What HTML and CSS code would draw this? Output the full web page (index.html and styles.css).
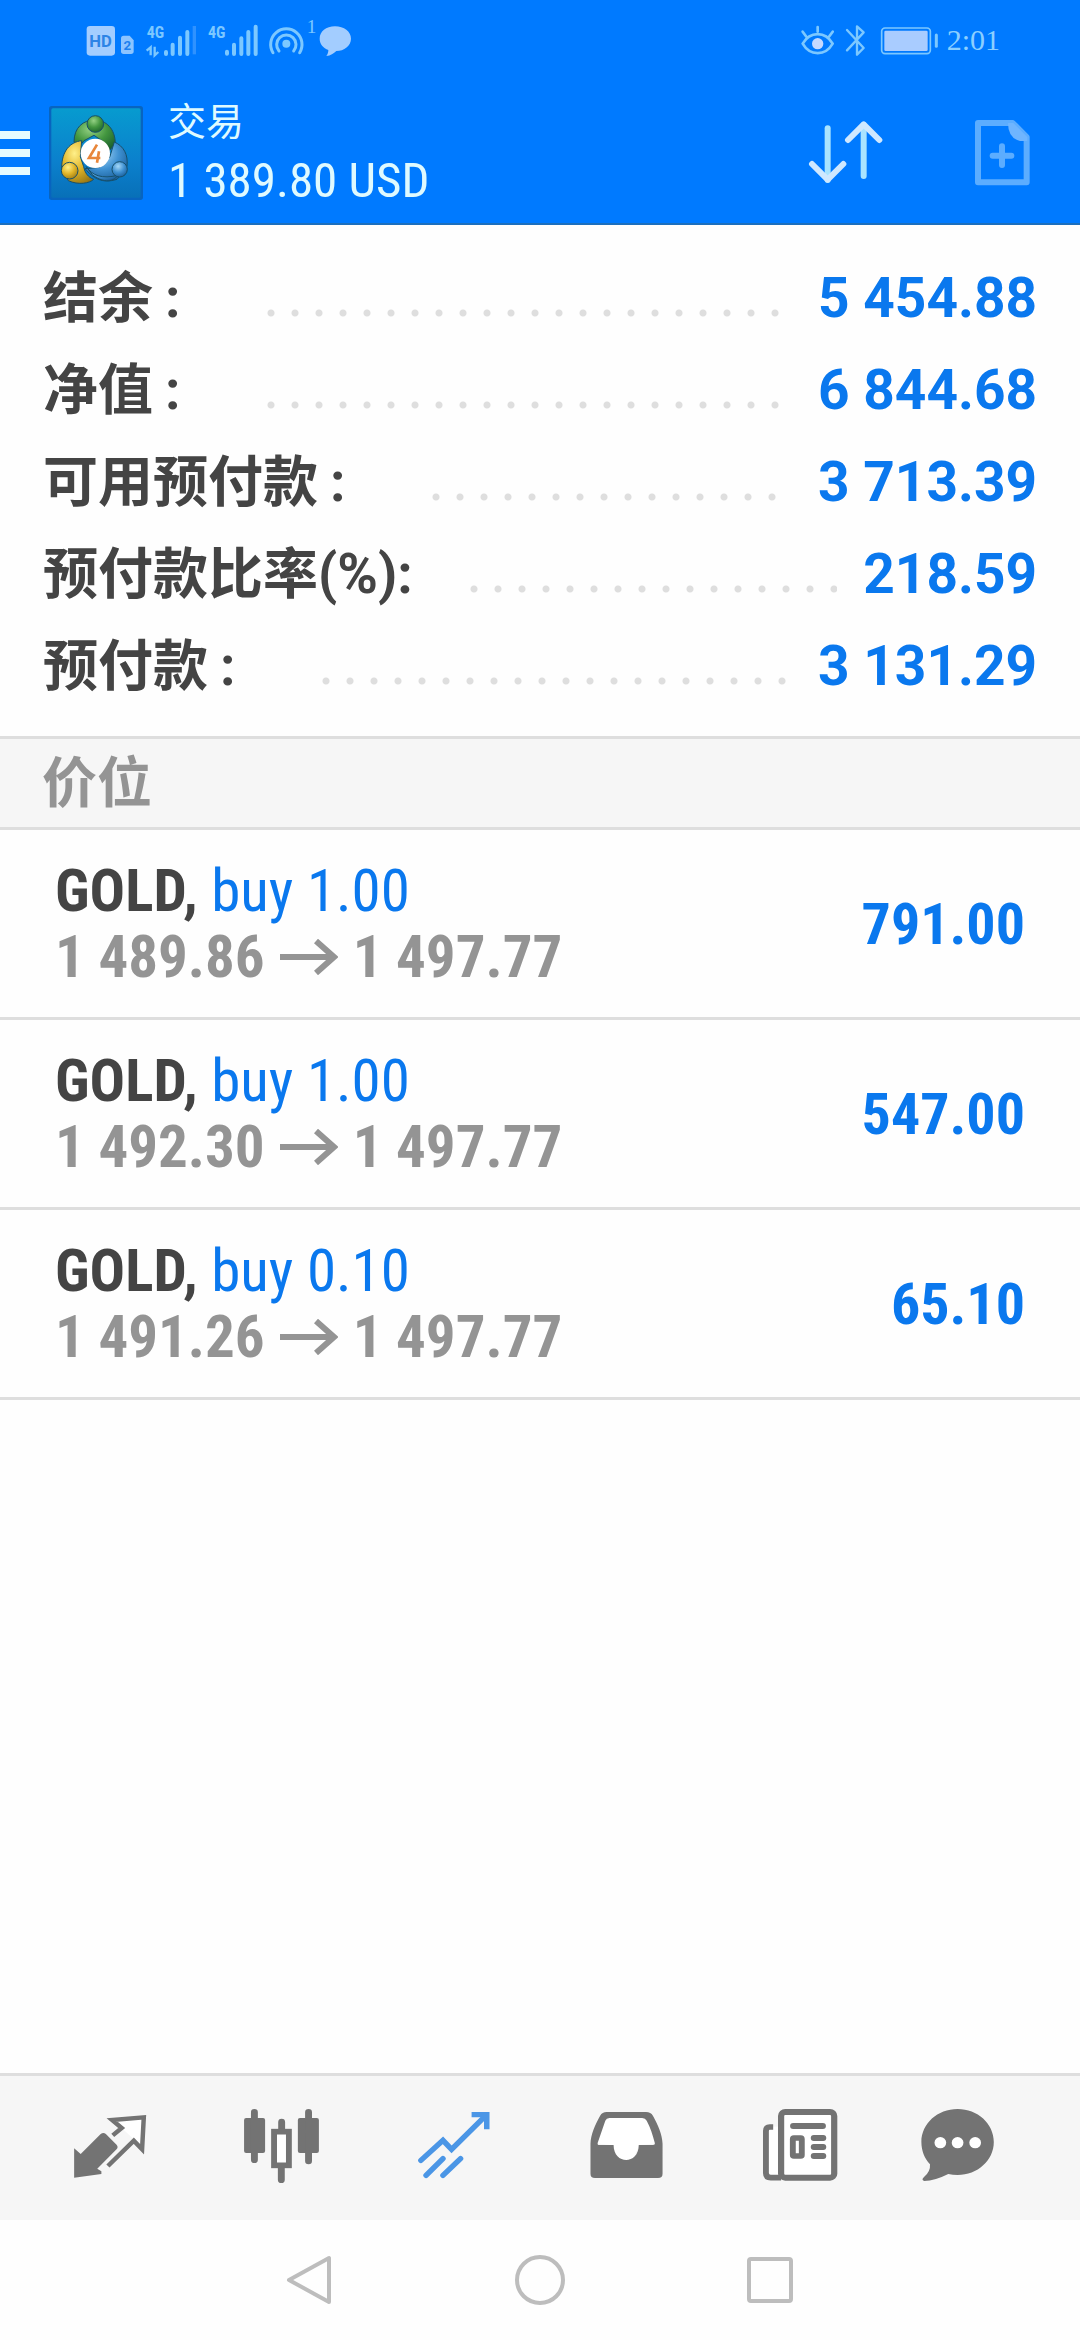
FILE: index.html
```html
<!DOCTYPE html>
<html lang="zh-CN">
<head>
<meta charset="utf-8">
<meta name="viewport" content="width=device-width, initial-scale=1">
<title>交易</title>
<link rel="stylesheet" href="styles.css">
</head>
<body>
<header class="top">
  <div class="status">
    <svg class="status-left" width="280" height="40" viewBox="0 0 840 120" aria-hidden="true">
      <rect x="20" y="18" width="85" height="89" rx="10" fill="#a3cdff"/>
      <text x="62" y="82" text-anchor="middle" class="hd">HD</text>
      <path d="M123 55q0-8 8-8h18l12 14v33q0 8-8 8h-22q-8 0-8-8z" fill="#8cc4ff"/>
      <text x="142" y="91" text-anchor="middle" class="sim">2</text>
      <text x="200" y="53" class="net">4G</text>
      <path d="M200 92l12-10v24M224 80v26l11-10" fill="none" stroke="#7cc8ff" stroke-width="7"/>
      <path d="M258 96v6M278 74v28M300 53v49M322 36v66" stroke="#7cc8ff" stroke-width="12" stroke-linecap="round"/>
      <path d="M343 18v85" stroke="#2f92ff" stroke-width="10"/>
      <text x="384" y="53" class="net">4G</text>
      <path d="M441 95v6M462 74v28M484 55v47M505 36v66M527 20v82" stroke="#7cc8ff" stroke-width="12" stroke-linecap="round"/>
      <path d="M579 98a47 47 0 1 1 80 0M597 93a29 29 0 1 1 44 0" fill="none" stroke="#7cc8ff" stroke-width="9" stroke-linecap="round"/>
      <circle cx="619" cy="71" r="12" fill="#7cc8ff"/>
      <text x="680" y="40" class="count">1</text>
      <path d="M765 19c27 0 48 16 48 37s-21 37-44 37c-8 7-17 14-30 15 4-5 6-10 6-18-15-6-26-18-26-34 0-21 19-37 46-37z" fill="#a3cdff"/>
    </svg>
    <div class="status-right">
      <svg width="140" height="40" viewBox="0 0 420 120" aria-hidden="true">
        <g fill="none" stroke="#7cc8ff" stroke-width="8" stroke-linecap="round" stroke-linejoin="round">
          <path d="M5 71c22-38 68-38 90 0-22 38-68 38-90 0zM50 21v14M5 35l10 14M95 35l-10 14"/>
          <path d="M138 30l50 54-20 20V19l20 18-50 54" stroke-width="7"/>
          <rect x="242" y="24" width="146" height="77" rx="10" stroke-width="5"/>
          <path d="M406 45v34" stroke-width="9"/>
        </g>
        <circle cx="50" cy="71" r="17" fill="#c5d9ff"/>
        <rect x="250" y="32" width="130" height="61" rx="4" fill="#a9ccff"/>
      </svg>
      <time class="clock">2:01</time>
    </div>
  </div>
  <div class="bar">
    <button class="menu" aria-label="菜单"><i></i><i></i><i></i></button>
    <svg class="logo" width="94" height="94" viewBox="0 0 282 282" aria-hidden="true">
      <defs>
        <linearGradient id="bg" x1="0" y1="0" x2="0" y2="1"><stop offset="0" stop-color="#079bcf"/><stop offset=".6" stop-color="#0b80cd"/><stop offset="1" stop-color="#0870b8"/></linearGradient>
        <radialGradient id="gr" cx=".4" cy=".3" r=".8"><stop offset="0" stop-color="#94d183"/><stop offset=".5" stop-color="#43963f"/><stop offset="1" stop-color="#175b2b"/></radialGradient>
        <radialGradient id="ye" cx=".4" cy=".3" r=".8"><stop offset="0" stop-color="#fff08a"/><stop offset=".5" stop-color="#e0b428"/><stop offset="1" stop-color="#927314"/></radialGradient>
        <radialGradient id="bl" cx=".4" cy=".3" r=".8"><stop offset="0" stop-color="#a6d8f7"/><stop offset=".5" stop-color="#3f91d2"/><stop offset="1" stop-color="#12548f"/></radialGradient>
      </defs>
      <rect width="282" height="282" rx="8" fill="#0864bf"/>
      <rect x="7" y="7" width="268" height="268" rx="5" fill="url(#bg)"/>
      <g stroke="#17506b" stroke-width="3">
        <path d="M75 108c0-44 28-66 62-66s62 26 62 72l-20 22-20-32-24-16-30 16-10 12z" fill="url(#gr)"/>
        <path d="M196 108c28 12 42 38 38 72l-12 20-18 20c-46 14-72-4-96-32l44-4 30-30z" fill="url(#bl)"/>
        <path d="M98 104c-34 4-60 30-60 82l20 38c30 14 64 8 76-4-16-6-26-18-30-38l-10-30z" fill="url(#ye)"/>
        <path d="M112 182c16 26 48 38 94 26-14 24-50 20-76-2z" fill="url(#bl)"/>
        <circle cx="139" cy="54" r="25" fill="url(#gr)"/>
        <circle cx="62" cy="194" r="25" fill="url(#ye)"/>
        <circle cx="212" cy="190" r="23" fill="url(#bl)"/>
      </g>
      <circle cx="139" cy="142" r="44" fill="#fff"/>
      <path d="M144 116l-24 40h34M150 136l-6 34" fill="none" stroke="#e8863a" stroke-width="8"/>
    </svg>
    <div class="title">
      <h1>交易</h1>
      <p>1 389.80 USD</p>
    </div>
    <button class="icon-btn" aria-label="排序">
      <svg width="76" height="66" viewBox="0 0 228 198" fill="none" stroke-linecap="round" stroke-linejoin="round" stroke-width="18">
        <path d="M59 25v155" stroke="#a9e4ff"/><path d="M167 15v153" stroke="#a9e4ff"/>
        <path d="M12 132l47 47 47-47M120 60l47-47 47 47" stroke="#cfe8ff"/>
      </svg>
    </button>
    <button class="icon-btn" aria-label="新订单">
      <svg width="56" height="68" viewBox="0 0 168 204">
        <path d="M12 12h104l42 42v136H12z" fill="none" stroke="#5cadff" stroke-width="18" stroke-linejoin="round"/>
        <path d="M102 12h16l42 42v12h-22q-36-8-36-54z" fill="#6fb5ff"/>
        <path d="M84 82v56M56 110h56" stroke="#5cadff" stroke-width="18" stroke-linecap="round"/>
      </svg>
    </button>
  </div>
</header>

<main class="content">
  <dl class="summary">
    <div class="line"><dt>结余<span class="colon">:</span></dt><dd>5 454.88</dd></div>
    <div class="line"><dt>净值<span class="colon">:</span></dt><dd>6 844.68</dd></div>
    <div class="line"><dt>可用预付款<span class="colon">:</span></dt><dd>3 713.39</dd></div>
    <div class="line"><dt>预付款比率(%):</dt><dd>218.59</dd></div>
    <div class="line"><dt>预付款<span class="colon">:</span></dt><dd>3 131.29</dd></div>
  </dl>
  <h2 class="section">价位</h2>
  <ul class="positions">
    <li>
      <div><p class="deal"><b>GOLD,</b> buy 1.00</p>
      <p class="prices">1 489.86 <svg class="arrow" viewBox="0 0 58 36"><path d="M0 18h54M36 2l18 16-18 16"/></svg> 1 497.77</p></div>
      <strong>791.00</strong>
    </li>
    <li>
      <div><p class="deal"><b>GOLD,</b> buy 1.00</p>
      <p class="prices">1 492.30 <svg class="arrow" viewBox="0 0 58 36"><path d="M0 18h54M36 2l18 16-18 16"/></svg> 1 497.77</p></div>
      <strong>547.00</strong>
    </li>
    <li>
      <div><p class="deal"><b>GOLD,</b> buy 0.10</p>
      <p class="prices">1 491.26 <svg class="arrow" viewBox="0 0 58 36"><path d="M0 18h54M36 2l18 16-18 16"/></svg> 1 497.77</p></div>
      <strong>65.10</strong>
    </li>
  </ul>
</main>

<nav class="tabs">
  <button aria-label="行情">
    <svg viewBox="203 138 232 240" preserveAspectRatio="none">
      <path d="M215 265l19 17 58-60q8-6 15 0l31 32q6 7 0 14l-56 58 12 8v8l-79 11z"/>
      <path d="M353 204l-28-22 90-8-5 90-22-26z" fill="#fff"/>
      <path class="stroke" d="M327 226l26-22-28-24 92-8-5 96-24-26-75 76" stroke-width="13"/>
    </svg>
  </button>
  <button aria-label="图表">
    <svg viewBox="703 138 232 240" preserveAspectRatio="none">
      <rect x="709" y="174" width="61" height="105" rx="6"/><rect x="865" y="174" width="61" height="105" rx="6"/>
      <rect x="796" y="215" width="43" height="100" fill="#fff"/>
      <path class="stroke round" d="M739 157v142M896 157v146M818 186v25M817 323v36" stroke-width="20"/>
      <rect class="stroke" x="796" y="215" width="43" height="101" stroke-width="17"/>
    </svg>
  </button>
  <button class="active" aria-label="交易" aria-current="page">
    <svg viewBox="1202 138 232 240" preserveAspectRatio="none">
      <path class="stroke round" d="M1222 301l64-60 25 27 96-98M1237 346l49-50M1286 346l51-50" stroke-width="16"/>
      <path class="stroke" d="M1369 164h44v44" stroke-width="16"/>
    </svg>
  </button>
  <button aria-label="历史">
    <svg viewBox="134 138 232 240" preserveAspectRatio="none">
      <path d="M185 165h130l26 85-52 5-22 50h-45l-18-50-40-5z" fill="#fff"/>
      <path fill-rule="evenodd" d="M194 156h114q14 0 20 11c15 27 27 57 28 84v90q0 13-13 13H160q-13 0-13-13v-90c1-27 13-57 28-84q6-11 19-11zm8 18q-9 0-12 8l-22 66q-2 7 5 7h41c0 60 73 60 73 0h41q8 0 5-8c-6-24-12-44-23-65q-4-8-13-8z"/>
    </svg>
  </button>
  <button aria-label="新闻">
    <svg viewBox="633 138 232 240" preserveAspectRatio="none">
      <rect x="700" y="156" width="154" height="198" fill="#fff"/>
      <path d="M656 200h44v150h-44z" fill="#fff"/>
      <rect class="stroke" x="700" y="156" width="154" height="197" rx="12" stroke-width="18"/>
      <path class="stroke" d="M677 201h-10q-11 0-11 12v126q0 14 14 14h30" stroke-width="17"/>
      <path class="stroke round" d="M735 198h86M795 234h27M795 261h27M795 288h27" stroke-width="18"/>
      <rect class="stroke" x="734" y="234" width="26" height="54" rx="3" stroke-width="17"/>
    </svg>
  </button>
  <button aria-label="消息">
    <svg viewBox="1133 138 232 240" preserveAspectRatio="none">
      <path d="M1213 147c58 0 105 44 105 99s-47 99-105 99q-14 0-27-3-38 20-70 21-9-3-1-11 20-17 18-39c-16-18-25-41-25-67 0-55 47-99 105-99z"/>
      <g fill="#fff"><circle cx="1163" cy="248" r="17"/><circle cx="1213" cy="248" r="17"/><circle cx="1264" cy="248" r="17"/></g>
    </svg>
  </button>
</nav>

<footer class="system">
  <button aria-label="返回"><svg viewBox="0 0 52 52"><path d="M45 4v44L5 26z"/></svg></button>
  <button aria-label="主屏幕"><svg viewBox="0 0 52 52"><circle cx="26" cy="26" r="23"/></svg></button>
  <button aria-label="最近任务"><svg viewBox="0 0 52 52"><rect x="5" y="5" width="42" height="42" rx="2"/></svg></button>
</footer>
</body>
</html>
```
FILE: styles.css
```css
* { box-sizing: border-box; margin: 0; padding: 0; }

body {
  display: flex;
  flex-direction: column;
  min-height: 100vh;
  background: #fefefe;
  color: #444;
  font-family: Roboto, "Noto Sans CJK SC", sans-serif;
}

button { display: grid; place-items: center; border: 0; background: none; }
svg { display: block; }

/* Header */
.top { background: #007aff; border-bottom: 2px solid #1c6fbd; }
.status { display: flex; justify-content: space-between; padding: 20px 80px; }
.status-left { overflow: visible; }
.status-right { display: flex; align-items: center; gap: 6px; }
.hd { font: 700 50px Roboto, sans-serif; fill: #2d84e6; }
.sim { font: 700 40px Roboto, sans-serif; fill: #1c80f0; }
.net { font: 700 48px "Roboto Condensed", "Liberation Sans Narrow", Roboto, sans-serif; fill: #7cc8ff; }
.count { font: 400 58px "Liberation Serif", serif; fill: #7cc8ff; }
.clock { color: #8ccfff; font: 400 30px/40px "Liberation Serif", serif; }

.bar { display: flex; align-items: center; height: 143px; padding: 2px 50px 0 0; }
.menu { gap: 10px; width: 30px; margin-right: 19px; }
.menu i { width: 30px; height: 8px; background: #e6fbff; }
.title { flex: 1; padding: 8px 0 0 25px; color: #dffaff; }
.title h1 { font-size: 38px; font-weight: 400; line-height: 48px; }
.title p { font-size: 49px; line-height: 70px; font-family: "Roboto Condensed", "Liberation Sans Narrow", Roboto, sans-serif; }
.icon-btn + .icon-btn { margin-left: 90px; }

/* Account summary */
.content { flex: 1; }
.summary { padding: 27px 43px 24px; }
.line { display: flex; align-items: center; height: 92px; font-size: 55px; line-height: 92px; font-weight: 700; white-space: nowrap; }
.line dt { display: flex; flex: 1; }
.line dt::after {
  content: "";
  flex: 1;
  margin: 0 26px 0 42px;
  background: radial-gradient(circle at 19px 61px, #dedede 3px, transparent 4px) 0 0 / 24px 92px repeat-x;
}
/* The colon fills a full-width cell after the label */
.colon { width: 57px; padding-left: 12px; }
.line dd { color: #0a78ee; }

.section {
  padding-left: 42px;
  border: solid #dedede;
  border-width: 3px 0;
  background: #f6f6f6;
  color: #949494;
  font-size: 55px;
  font-weight: 700;
  line-height: 88px;
}

/* Open positions */
.positions { list-style: none; font-family: "Roboto Condensed", "Liberation Sans Narrow", Roboto, sans-serif; }
.positions li { display: flex; align-items: center; justify-content: space-between; height: 190px; padding: 0 55px; border-bottom: 3px solid #dedede; }
.deal { color: #0a78ee; font-size: 59px; line-height: 66px; }
.deal b { color: #444; }
.prices { display: flex; align-items: center; gap: 15px; color: #949494; font-size: 59px; font-weight: 700; line-height: 66px; }
.arrow { width: 58px; height: 36px; fill: none; stroke: #949494; stroke-width: 6; }
.positions strong { color: #0a78ee; font-size: 58px; }

/* Tab bar */
.tabs { display: grid; grid-template-columns: repeat(6, 1fr); height: 147px; padding: 0 24px 4px; border-top: 3px solid #dedede; background: #f6f6f6; color: #737373; }
.tabs svg { width: 80px; height: 80px; fill: currentColor; overflow: visible; }
.tabs .stroke { fill: none; stroke: currentColor; }
.tabs .round { stroke-linecap: round; }
.tabs button { color: inherit; }
.tabs .active { color: #4b96e6; }

/* System navigation */
.system { display: flex; justify-content: center; gap: 178px; height: 120px; }
.system svg { width: 52px; height: 52px; fill: none; stroke: #bdbdbd; stroke-width: 4; stroke-linejoin: round; }
```
